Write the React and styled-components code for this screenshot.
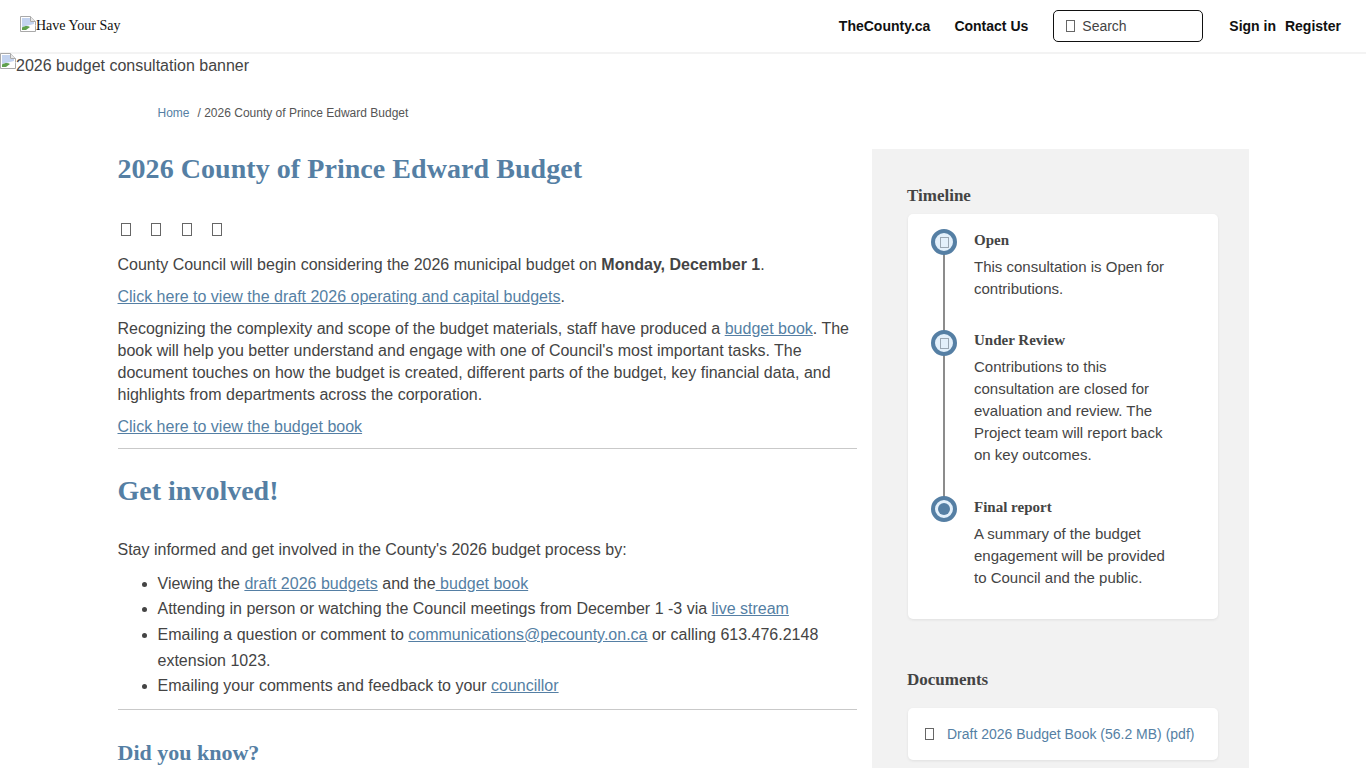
import React from "react";
import styled, { createGlobalStyle } from "styled-components";

const GlobalStyle = createGlobalStyle`
  html, body {
    margin: 0;
    padding: 0;
    height: 768px;
    overflow: hidden;
    background: #fff;
  }
  body {
    font-family: "Liberation Sans", Arial, sans-serif;
    font-size: 16px;
    line-height: 22px;
    color: #444;
  }
`;

const BrokenImage = () => (
  <BrokenSvg viewBox="0 0 16 16">
    <path d="M0.5 0.5H10.5L15.5 5.5V15.5H0.5Z" fill="#fff" stroke="#a9a9a9" />
    <path d="M10.5 0.5V5.5H15.5" fill="#e8e8e8" stroke="#a9a9a9" />
    <path d="M2 2H10V6H14V8L2 11Z" fill="#c3d3ef" />
    <path d="M2 14V11.5C5 9.5 8 9.5 10 11L6 14Z" fill="#5fa04e" />
    <path d="M9 15L15.5 9V10L10.5 15Z" fill="#fff" />
  </BrokenSvg>
);

const App = () => (
  <Page>
    <GlobalStyle />
    <Header>
      <Logo>
        <BrokenImage />
        <span>Have Your Say</span>
      </Logo>
      <Nav>
        <NavLink>TheCounty.ca</NavLink>
        <NavLink>Contact Us</NavLink>
        <SearchBox>
          <Tofu />
          <span>Search</span>
        </SearchBox>
        <AuthLinks>
          <NavLink>Sign in</NavLink>
          <NavLink>Register</NavLink>
        </AuthLinks>
      </Nav>
    </Header>

    <Banner>
      <BrokenImage />
      <span>2026 budget consultation banner</span>
    </Banner>

    <Breadcrumb>
      <CrumbLink href="#">Home</CrumbLink>
      <span>/ 2026 County of Prince Edward Budget</span>
    </Breadcrumb>

    <Columns>
      <Main>
        <Title>2026 County of Prince Edward Budget</Title>
        <ShareRow>
          <ShareIcon />
          <ShareIcon />
          <ShareIcon />
          <ShareIcon />
        </ShareRow>
        <Para>
          County Council will begin considering the 2026 municipal budget on <strong>Monday, December 1</strong>.
        </Para>
        <Para>
          <TextLink href="#">Click here to view the draft 2026 operating and capital budgets</TextLink>.
        </Para>
        <Para>
          Recognizing the complexity and scope of the budget materials, staff have produced a{" "}
          <TextLink href="#">budget book</TextLink>. The book will help you better understand and engage with one of
          Council's most important tasks. The document touches on how the budget is created, different parts of the
          budget, key financial data, and highlights from departments across the corporation.
        </Para>
        <Para>
          <TextLink href="#">Click here to view the budget book</TextLink>
        </Para>
        <Rule />
        <Heading>Get involved!</Heading>
        <Para>Stay informed and get involved in the County's 2026 budget process by:</Para>
        <BulletList>
          <li>
            Viewing the <TextLink href="#">draft 2026 budgets</TextLink> and the<TextLink href="#"> budget book</TextLink>
          </li>
          <li>
            Attending in person or watching the Council meetings from December 1 -3 via{" "}
            <TextLink href="#">live stream</TextLink>
          </li>
          <li>
            Emailing a question or comment to <TextLink href="#">communications@pecounty.on.ca</TextLink> or calling
            613.476.2148 extension 1023.
          </li>
          <li>
            Emailing your comments and feedback to your <TextLink href="#">councillor</TextLink>
          </li>
        </BulletList>
        <Rule />
        <SubHeading>Did you know?</SubHeading>
      </Main>

      <Sidebar>
        <SideTitle>Timeline</SideTitle>
        <Card>
          <Stage $pad={19}>
            <Marker>
              <Tofu $small />
            </Marker>
            <StageBody>
              <StageTitle>Open</StageTitle>
              <StageText>This consultation is Open for contributions.</StageText>
            </StageBody>
          </Stage>
          <Stage $pad={20}>
            <Marker $nudge>
              <Tofu $small />
            </Marker>
            <StageBody>
              <StageTitle>Under Review</StageTitle>
              <StageText>
                Contributions to this consultation are closed for evaluation and review. The Project team will report
                back on key outcomes.
              </StageText>
            </StageBody>
          </Stage>
          <Stage $last>
            <Marker>
              <Dot />
            </Marker>
            <StageBody>
              <StageTitle>Final report</StageTitle>
              <StageText>A summary of the budget engagement will be provided to Council and the public.</StageText>
            </StageBody>
          </Stage>
        </Card>
        <DocsTitle>Documents</DocsTitle>
        <DocCard>
          <Tofu />
          <DocLink href="#">Draft 2026 Budget Book (56.2 MB) (pdf)</DocLink>
        </DocCard>
      </Sidebar>
    </Columns>
  </Page>
);

const Page = styled.div`
  height: 768px;
  overflow: hidden;
`;

const Header = styled.header`
  height: 52px;
  display: flex;
  align-items: center;
  justify-content: space-between;
  padding: 0 25px 0 20px;
  border-bottom: 2px solid #f3f3f3;
`;

const BrokenSvg = styled.svg`
  width: 16px;
  height: 16px;
  flex: none;
`;

const Logo = styled.div`
  display: flex;
  align-items: flex-start;
  height: 18px;
  margin-top: -3px;
  font-family: "Liberation Serif", "Times New Roman", serif;
  font-size: 14px;
  line-height: 18px;
  color: #111;

  span {
    margin-top: 1px;
  }
`;

const Nav = styled.nav`
  display: flex;
  align-items: center;
`;

const NavLink = styled.a`
  font-size: 14px;
  font-weight: 700;
  color: #111;
  margin-right: 25px;

  &:first-child {
    margin-right: 24px;
  }

  &:last-child {
    margin-right: 0;
  }
`;

const AuthLinks = styled.div`
  display: flex;
  margin-left: 26px;

  ${NavLink}:first-child {
    margin-right: 9px;
  }
`;

const SearchBox = styled.div`
  box-sizing: border-box;
  width: 150px;
  height: 32px;
  display: flex;
  align-items: center;
  gap: 7px;
  padding-left: 12px;
  border: 1px solid #111;
  border-radius: 5px;
  font-size: 14px;
  color: #444;
`;

const Tofu = styled.i`
  box-sizing: border-box;
  display: inline-block;
  flex: none;
  width: 9px;
  height: ${(p) => (p.$small ? "11px" : "12px")};
  border: 1px solid ${(p) => (p.$small ? "#9aa7b3" : "#666")};
`;

const Banner = styled.div`
  display: flex;
  align-items: flex-start;
  height: 25px;
  margin-top: -1px;
  color: #444;

  span {
    line-height: 22px;
    margin-top: 2px;
  }
`;

const Breadcrumb = styled.div`
  display: flex;
  gap: 8px;
  margin: 24px 0 0 157.5px;
  font-size: 12px;
  line-height: 22px;
  color: #555;
`;

const CrumbLink = styled.a`
  color: #557fa4;
  text-decoration: none;
`;

const Columns = styled.div`
  display: flex;
  align-items: flex-start;
  gap: 15.5px;
  margin: 25px 0 0 117.5px;
  width: 1131.5px;
`;

const Main = styled.main`
  width: 739px;
  flex: none;
`;

const Title = styled.h1`
  margin: 0;
  font-family: "Liberation Serif", "Times New Roman", serif;
  font-size: 28px;
  line-height: 40px;
  letter-spacing: 0.05px;
  font-weight: 700;
  color: #557fa4;
`;

const ShareRow = styled.div`
  display: flex;
  gap: 20.5px;
  height: 21px;
  margin: 34px 0 0 3px;
`;

const ShareIcon = styled(Tofu)`
  width: 10px;
  height: 13px;
`;

const Para = styled.p`
  margin: 10px 0 0;
`;

const TextLink = styled.a`
  color: #557fa4;
  text-decoration: underline;
`;

const Rule = styled.hr`
  margin: 10px 0 0;
  border: 0;
  border-top: 1px solid #c9c9c9;
`;

const Heading = styled.h2`
  margin: 21px 0 28px;
  font-family: "Liberation Serif", "Times New Roman", serif;
  font-size: 28px;
  line-height: 41px;
  font-weight: 700;
  color: #557fa4;
`;

const BulletList = styled.ul`
  margin: 9.8px 0 0;
  padding: 0 0 0 40px;
  line-height: 25.6px;
`;

const SubHeading = styled.h3`
  margin: 27px 0 0;
  font-family: "Liberation Serif", "Times New Roman", serif;
  font-size: 22px;
  line-height: 32px;
  font-weight: 700;
  color: #557fa4;
`;

const Sidebar = styled.aside`
  box-sizing: border-box;
  width: 377px;
  height: 620px;
  flex: none;
  padding: 36px 31px 0 35px;
  background: #f2f2f2;
`;

const SideTitle = styled.h4`
  margin: 0 0 7px;
  font-family: "Liberation Serif", "Times New Roman", serif;
  font-size: 17px;
  line-height: 22px;
  font-weight: 700;
  color: #444;
`;

const Card = styled.div`
  box-sizing: border-box;
  width: 310px;
  height: 405px;
  margin-left: 1px;
  padding: 15px 0 0 23px;
  background: #fff;
  border-radius: 5px;
  box-shadow: 0 1px 3px rgba(0, 0, 0, 0.08);
`;

const Stage = styled.div`
  position: relative;
  display: flex;
  gap: 17px;
  padding-bottom: ${(p) => p.$pad || 0}px;

  ${(p) =>
    !p.$last &&
    `&::before {
      content: "";
      position: absolute;
      left: 12px;
      top: 24px;
      bottom: -2px;
      width: 2px;
      background: #8c8c8c;
    }`}
`;

const Marker = styled.div`
  position: relative;
  box-sizing: border-box;
  width: 26px;
  height: 26px;
  flex: none;
  margin-top: ${(p) => (p.$nudge ? "1px" : "0")};
  display: flex;
  align-items: center;
  justify-content: center;
  border: 4px solid #557fa4;
  border-radius: 50%;
  background: #e3f0fb;
`;

const Dot = styled.span`
  width: 12px;
  height: 12px;
  border-radius: 50%;
  background: #557fa4;
`;

const StageBody = styled.div`
  width: 195px;
`;

const StageTitle = styled.div`
  font-family: "Liberation Serif", "Times New Roman", serif;
  font-size: 15px;
  line-height: 22px;
  font-weight: 700;
  color: #444;
`;

const StageText = styled.p`
  margin: 5px 0 0;
  font-size: 15px;
  line-height: 22px;
  padding-bottom: 10px;
`;

const DocsTitle = styled(SideTitle)`
  margin: 50px 0 17px;
`;

const DocCard = styled.div`
  box-sizing: border-box;
  width: 310px;
  height: 52px;
  margin-left: 1px;
  display: flex;
  align-items: center;
  gap: 13px;
  padding-left: 17px;
  background: #fff;
  border-radius: 5px;
  box-shadow: 0 1px 3px rgba(0, 0, 0, 0.08);
`;

const DocLink = styled.a`
  font-size: 14px;
  color: #557fa4;
  text-decoration: none;
`;

export default App;
